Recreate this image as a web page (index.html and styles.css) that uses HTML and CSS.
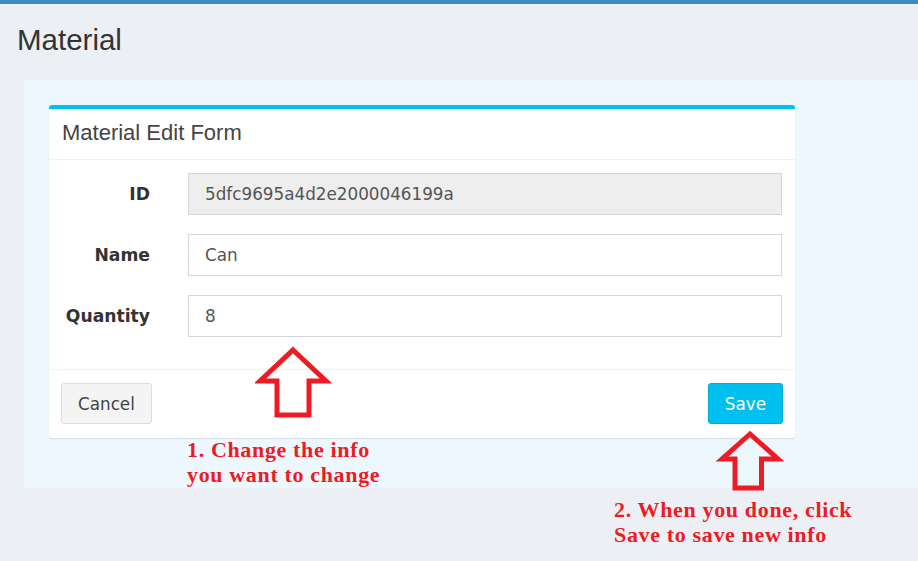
FILE: index.html
```html
<!DOCTYPE html>
<html>
<head>
<meta charset="utf-8">
<link rel="stylesheet" href="styles.css">
</head>
<body>
<div class="topbar"></div>
<h1 class="page-title">Material</h1>
<section class="content">
  <div class="card">
    <div class="card-header">Material Edit Form</div>
    <div class="card-body">
      <div class="row">
        <label class="label">ID</label>
        <div class="input readonly">5dfc9695a4d2e2000046199a</div>
      </div>
      <div class="row">
        <label class="label">Name</label>
        <div class="input">Can</div>
      </div>
      <div class="row">
        <label class="label">Quantity</label>
        <div class="input">8</div>
      </div>
    </div>
    <div class="card-footer">
      <button class="btn btn-default">Cancel</button>
      <button class="btn btn-info">Save</button>
    </div>
  </div>
</section>

<svg class="arrow arrow-1" width="80" height="80" viewBox="255 345 80 80">
  <polygon points="293,350 326,381 309,381 309,415 277,415 277,381 260,381" />
</svg>
<svg class="arrow arrow-2" width="70" height="70" viewBox="715 428 70 70">
  <polygon points="750,434 778,459 761.5,459 761.5,488 735,488 735,459 722,459" />
</svg>

<div class="note note-1">1. Change the info<br>you want to change</div>
<div class="note note-2">2. When you done, click<br>Save to save new info</div>
</body>
</html>
```

FILE: styles.css
```css
html, body {
  margin: 0;
  padding: 0;
}
body {
  background: #ecf0f5;
  width: 918px;
  height: 561px;
  overflow: hidden;
  position: relative;
  font-family: "DejaVu Sans", Verdana, sans-serif;
  color: #333;
}
.topbar {
  height: 4px;
  background: #3f8bbd;
}
.page-title {
  margin: 0;
  padding: 19.5px 0 0 17px;
  height: 76px;
  box-sizing: border-box;
  font-family: "Liberation Sans", Arial, sans-serif;
  font-weight: normal;
  font-size: 29.5px;
  line-height: 32.5px;
  color: #333;
}
.content {
  margin: 0 0 0 24px;
  background: #edf7fe;
  border-radius: 0 0 0 3px;
  padding: 25px 0 50px 25px;
}
.card {
  width: 746px;
  background: #fff;
  border-top: 4px solid #00c0ef;
  border-radius: 3px;
  box-shadow: 0 1px 1px rgba(0, 0, 0, 0.1);
}
.card-header {
  height: 51px;
  box-sizing: border-box;
  padding: 13px 13px;
  border-bottom: 1px solid #f1f1f1;
  font-family: "Liberation Sans", Arial, sans-serif;
  font-size: 22px;
  line-height: 22px;
  color: #444;
}
.card-body {
  padding: 13px 13px 32px 13px;
  display: flex;
  flex-direction: column;
  gap: 19px;
}
.row {
  display: grid;
  grid-template-columns: 88px 1fr;
  column-gap: 38px;
  align-items: center;
}
.label {
  text-align: right;
  font-weight: bold;
  font-size: 17.2px;
  color: #333;
}
.input {
  height: 42px;
  box-sizing: border-box;
  border: 1px solid #d2d6de;
  padding: 0 16px;
  display: flex;
  align-items: center;
  font-size: 16.8px;
  color: #555;
  background: #fff;
}
.input.readonly {
  background: #eee;
}
.card-footer {
  border-top: 1px solid #f1f1f1;
  padding: 13px 12px 14px 12px;
  display: flex;
  justify-content: space-between;
}
.btn {
  height: 41px;
  box-sizing: border-box;
  padding: 0 16px;
  border-radius: 3px;
  font-family: "DejaVu Sans", Verdana, sans-serif;
  font-size: 16.8px;
  border: 1px solid transparent;
}
.btn-default {
  background: #f4f4f4;
  border-color: #ddd;
  color: #444;
}
.btn-info {
  background: #00c0ef;
  border-color: #00acd6;
  color: #fff;
}
.arrow {
  position: absolute;
}
.arrow polygon {
  fill: none;
  stroke: #ed1c24;
  stroke-width: 5;
  stroke-linejoin: miter;
}
.arrow-1 {
  left: 255px;
  top: 345px;
}
.arrow-2 {
  left: 715px;
  top: 428px;
}
.note {
  position: absolute;
  font-family: "Liberation Serif", "Times New Roman", serif;
  font-weight: bold;
  font-size: 22px;
  line-height: 25px;
  letter-spacing: 0.65px;
  color: #ed1c24;
  white-space: nowrap;
}
.note-1 {
  left: 187px;
  top: 437px;
}
.note-2 {
  left: 614px;
  top: 497px;
}
```
